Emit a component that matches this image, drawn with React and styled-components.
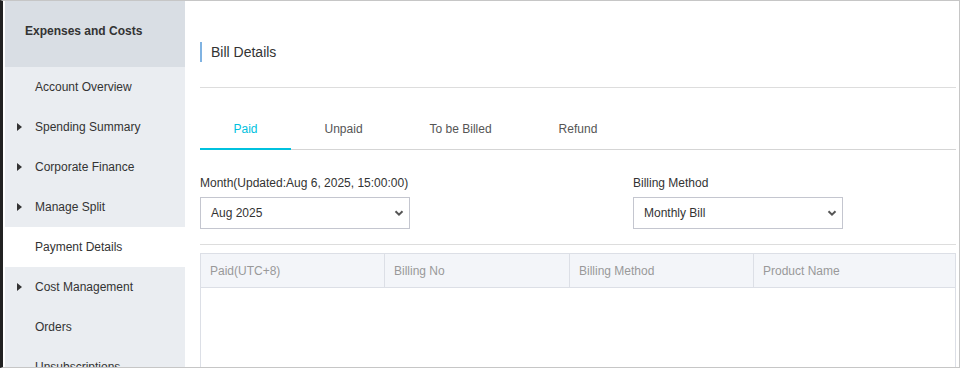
import React from 'react';
import styled, { createGlobalStyle } from 'styled-components';

const GlobalStyle = createGlobalStyle`
  html, body {
    margin: 0;
    padding: 0;
    background: #fff;
  }
  body {
    font-family: "Liberation Sans", Arial, sans-serif;
    font-size: 12px;
    color: #333;
  }
`;

const Frame = styled.div`
  box-sizing: border-box;
  width: 960px;
  height: 368px;
  border: 1px solid #c6c6c6;
  border-left: 3px solid #222;
  padding-left: 2px;
  display: flex;
  overflow: hidden;
  background: #fff;
`;

const Sidebar = styled.div`
  width: 180px;
  flex-shrink: 0;
  background: #eaedf1;
  display: flex;
  flex-direction: column;
`;

const SideHeader = styled.div`
  height: 66px;
  flex-shrink: 0;
  background: #d9dee4;
  font-weight: bold;
  font-size: 12px;
  padding-left: 20px;
  line-height: 61px;
  color: #333;
`;

const SideItem = styled.div`
  height: 40px;
  flex-shrink: 0;
  display: flex;
  align-items: center;
  padding-left: 30px;
  position: relative;
  background: ${p => (p.$active ? '#fff' : 'transparent')};
  color: #333;
`;

const Caret = styled.span`
  position: absolute;
  left: 12px;
  top: 16px;
  width: 0;
  height: 0;
  border-top: 4.5px solid transparent;
  border-bottom: 4.5px solid transparent;
  border-left: 5px solid #333;
`;

const Main = styled.div`
  flex: 1;
  padding: 0 3px 0 15px;
  display: flex;
  flex-direction: column;
  min-width: 0;
`;

const TitleRow = styled.div`
  height: 87px;
  box-sizing: border-box;
  padding-top: 41px;
  border-bottom: 1px solid #ddd;
`;

const Title = styled.div`
  border-left: 2px solid #80b3e2;
  padding-left: 9px;
  font-size: 14px;
  line-height: 20px;
  color: #333;
`;

const TabBar = styled.div`
  display: flex;
  padding-top: 22px;
  border-bottom: 1px solid #d5d5d5;
`;

const Tab = styled.div`
  height: 40px;
  box-sizing: border-box;
  padding: 0 33.5px;
  line-height: 38px;
  margin-bottom: -1px;
  border-bottom: 2px solid ${p => (p.$active ? '#00c1de' : 'transparent')};
  color: ${p => (p.$active ? '#00c1de' : '#555')};
`;

const FormRow = styled.div`
  display: grid;
  grid-template-columns: 433px 433px;
  padding: 26px 0 15px;
  border-bottom: 1px solid #ddd;
`;

const Field = styled.div`
  display: flex;
  flex-direction: column;
  gap: 7px;
`;

const Label = styled.div`
  line-height: 14px;
  color: #333;
`;

const SelectBox = styled.div`
  width: 210px;
  height: 32px;
  box-sizing: border-box;
  border: 1px solid #c4c6cf;
  display: flex;
  align-items: center;
  justify-content: space-between;
  padding: 0 3px 0 10px;
  color: #333;
  background: #fff;
`;

const Table = styled.div`
  margin-top: 8px;
  flex: 1;
  border: 1px solid #dcdfe6;
  border-bottom: none;
`;

const HeadRow = styled.div`
  display: grid;
  grid-template-columns: 184px 185px 184px 1fr;
  height: 33px;
  background: #f3f5f9;
  border-bottom: 1px solid #dcdfe6;
`;

const HeadCell = styled.div`
  display: flex;
  align-items: center;
  padding-left: 9px;
  color: #999;
  border-right: ${p => (p.$last ? 'none' : '1px solid #dcdfe6')};
`;

const Chevron = () => (
  <svg width="14" height="14" viewBox="0 0 14 14">
    <path d="M3.5 5.2 L7 8.6 L10.5 5.2" fill="none" stroke="#555" strokeWidth="2" />
  </svg>
);

const menu = [
  { label: 'Account Overview' },
  { label: 'Spending Summary', caret: true },
  { label: 'Corporate Finance', caret: true },
  { label: 'Manage Split', caret: true },
  { label: 'Payment Details', active: true },
  { label: 'Cost Management', caret: true },
  { label: 'Orders' },
  { label: 'Unsubscriptions' },
];

const tabs = ['Paid', 'Unpaid', 'To be Billed', 'Refund'];
const columns = ['Paid(UTC+8)', 'Billing No', 'Billing Method', 'Product Name'];

export default function App() {
  return (
    <>
      <GlobalStyle />
      <Frame>
        <Sidebar>
          <SideHeader>Expenses and Costs</SideHeader>
          {menu.map(m => (
            <SideItem key={m.label} $active={m.active}>
              {m.caret && <Caret />}
              {m.label}
            </SideItem>
          ))}
        </Sidebar>
        <Main>
          <TitleRow>
            <Title>Bill Details</Title>
          </TitleRow>
          <TabBar>
            {tabs.map((t, i) => (
              <Tab key={t} $active={i === 0}>{t}</Tab>
            ))}
          </TabBar>
          <FormRow>
            <Field>
              <Label>Month(Updated:Aug 6, 2025, 15:00:00)</Label>
              <SelectBox>
                <span>Aug 2025</span>
                <Chevron />
              </SelectBox>
            </Field>
            <Field>
              <Label>Billing Method</Label>
              <SelectBox>
                <span>Monthly Bill</span>
                <Chevron />
              </SelectBox>
            </Field>
          </FormRow>
          <Table>
            <HeadRow>
              {columns.map((c, i) => (
                <HeadCell key={c} $last={i === columns.length - 1}>{c}</HeadCell>
              ))}
            </HeadRow>
          </Table>
        </Main>
      </Frame>
    </>
  );
}
